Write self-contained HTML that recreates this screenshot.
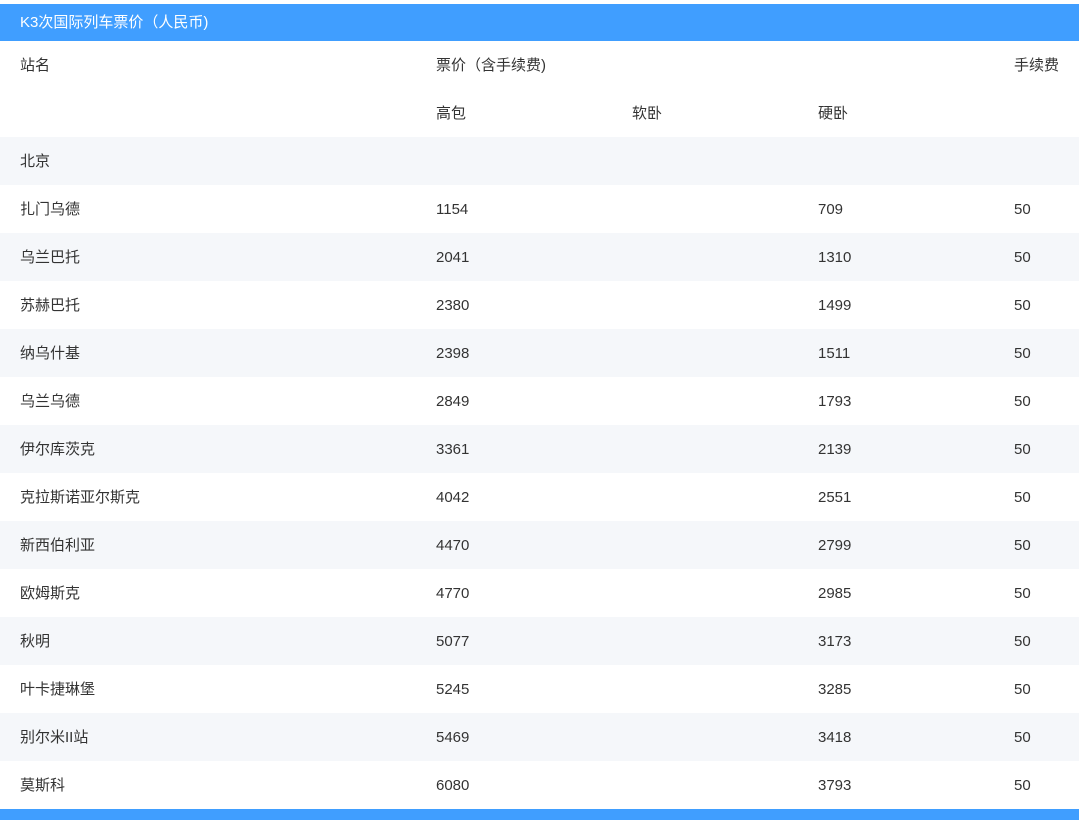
<!DOCTYPE html>
<html><head><meta charset="utf-8"><style>
body{margin:0;width:1079px;height:820px;overflow:hidden;background:#fff;font-family:"Liberation Sans","Noto Sans CJK SC",sans-serif;font-size:15px;color:#333}
.bar{position:absolute;left:0;width:1079px;background:#409eff;color:#fff}
.r{position:absolute;left:0;width:1079px;height:48px;line-height:48px}
.g{background:#f5f7fa}
.r span{position:absolute;top:1px}
.a{left:20px}.b{left:436px}.c{left:632px}.d{left:818px}.e{left:1014px}
</style></head><body>
<div class="bar" style="top:4px;height:37px;line-height:37px"><span style="position:absolute;left:20px">K3次国际列车票价（人民币)</span></div>
<div class="r" style="top:41px"><span class="a">站名</span><span class="b">票价（含手续费)</span><span class="e">手续费</span></div>
<div class="r" style="top:89px"><span class="b">高包</span><span class="c">软卧</span><span class="d">硬卧</span></div>
<div class="r g" style="top:137px"><span class="a">北京</span></div>
<div class="r" style="top:185px"><span class="a">扎门乌德</span><span class="b">1154</span><span class="d">709</span><span class="e">50</span></div>
<div class="r g" style="top:233px"><span class="a">乌兰巴托</span><span class="b">2041</span><span class="d">1310</span><span class="e">50</span></div>
<div class="r" style="top:281px"><span class="a">苏赫巴托</span><span class="b">2380</span><span class="d">1499</span><span class="e">50</span></div>
<div class="r g" style="top:329px"><span class="a">纳乌什基</span><span class="b">2398</span><span class="d">1511</span><span class="e">50</span></div>
<div class="r" style="top:377px"><span class="a">乌兰乌德</span><span class="b">2849</span><span class="d">1793</span><span class="e">50</span></div>
<div class="r g" style="top:425px"><span class="a">伊尔库茨克</span><span class="b">3361</span><span class="d">2139</span><span class="e">50</span></div>
<div class="r" style="top:473px"><span class="a">克拉斯诺亚尔斯克</span><span class="b">4042</span><span class="d">2551</span><span class="e">50</span></div>
<div class="r g" style="top:521px"><span class="a">新西伯利亚</span><span class="b">4470</span><span class="d">2799</span><span class="e">50</span></div>
<div class="r" style="top:569px"><span class="a">欧姆斯克</span><span class="b">4770</span><span class="d">2985</span><span class="e">50</span></div>
<div class="r g" style="top:617px"><span class="a">秋明</span><span class="b">5077</span><span class="d">3173</span><span class="e">50</span></div>
<div class="r" style="top:665px"><span class="a">叶卡捷琳堡</span><span class="b">5245</span><span class="d">3285</span><span class="e">50</span></div>
<div class="r g" style="top:713px"><span class="a">别尔米II站</span><span class="b">5469</span><span class="d">3418</span><span class="e">50</span></div>
<div class="r" style="top:761px"><span class="a">莫斯科</span><span class="b">6080</span><span class="d">3793</span><span class="e">50</span></div>
<div class="bar" style="top:809px;height:11px"></div>
</body></html>
